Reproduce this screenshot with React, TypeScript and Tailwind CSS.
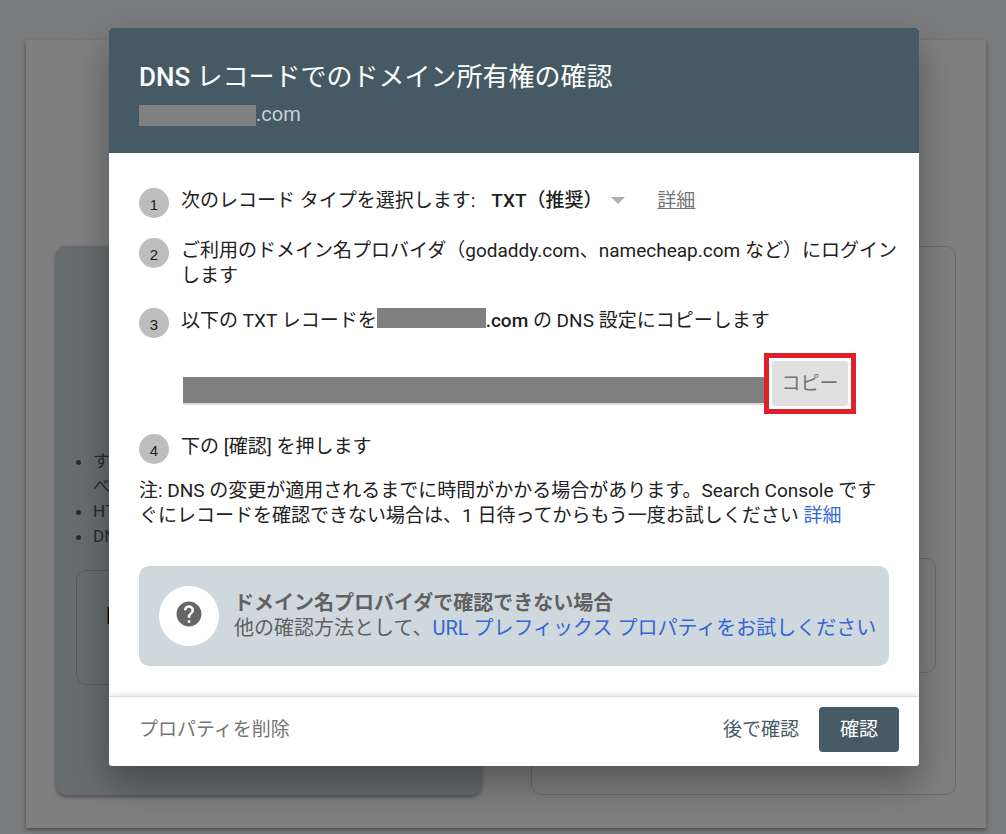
import type { ReactNode } from "react";
import { MdHelp } from "react-icons/md";

function Step({ number, children }: { number: number; children: ReactNode }) {
  return (
    <li className="flex items-start gap-3">
      <span className="flex size-[30px] shrink-0 items-center justify-center rounded-full bg-[#bdbdbd] pt-0.5 font-['Liberation_Sans',sans-serif] text-[15px]">
        {number}
      </span>
      <div className="min-w-0 flex-1">{children}</div>
    </li>
  );
}

function PropertyTypes() {
  return (
    <main className="mx-5 ml-[26px] flex h-[788px] gap-[50px] bg-white px-[30px] pt-[206px] pb-[33px] shadow-[0_2px_4px_rgba(0,0,0,0.4)]">
      <section className="flex flex-1 flex-col rounded-[10px] bg-[#cfd8dc] px-5 pt-[203px] shadow-[0_2px_4px_rgba(0,0,0,0.4)]">
        <ul className="list-disc pl-[17px] text-[17px] leading-[25px] text-[#455a64]">
          <li>
            すべ
            <br />
            べて
          </li>
          <li>HTTPS</li>
          <li>DNS</li>
        </ul>
        <div className="mt-[21px] h-[115px] rounded-[10px] border border-[#a9b4b9] px-[25px] pt-[30px] text-[20px] font-bold text-black">
          ドメイン
        </div>
      </section>
      <section className="flex-1 rounded-[10px] border border-[#d4d4d4] px-[19px] pt-[311px]">
        <div className="h-[115px] rounded-[10px] border border-[#d4d4d4]" />
      </section>
    </main>
  );
}

export default function App() {
  return (
    <div className="relative min-h-screen overflow-hidden bg-[#f4f6f9] pt-10 font-['Roboto','Noto_Sans_CJK_JP',sans-serif]">
      <PropertyTypes />
      <div className="absolute inset-0 bg-black/50 pt-7 pr-[87px] pl-[109px]">
        <div
          role="dialog"
          aria-modal="true"
          aria-labelledby="dialog-title"
          className="overflow-hidden rounded-[3px] bg-white text-[19px] leading-[25px] text-[#212121] shadow-[0_18px_36px_rgba(0,0,0,0.32)]"
        >
          <header className="bg-[#455a64] px-[30px] pt-[31px] pb-[22px]">
            <h1 id="dialog-title" className="text-[26px] leading-9 text-white">
              <span className="font-medium">DNS</span> レコードでのドメイン所有権の確認
            </h1>
            <p className="flex h-9 items-center pt-0.5 text-[20px] text-[#c7d0d5]">
              <span className="mt-0.5 h-[21px] w-[117px] bg-[#808080]" />
              .com
            </p>
          </header>

          <div className="pt-[35px] pb-[30px] pl-[30px]">
            <ol className="flex flex-col gap-5 pr-5">
              <Step number={1}>
                <div className="flex items-center">
                  <label htmlFor="record-type">次のレコード タイプを選択します:</label>
                  <div className="ml-4 flex items-center">
                    <select
                      id="record-type"
                      className="w-[136px] appearance-none bg-transparent font-medium"
                    >
                      <option>TXT（推奨）</option>
                    </select>
                    <svg viewBox="0 0 14 7" className="pointer-events-none -ml-4 h-[7px] w-3.5" fill="#b0b0b0">
                      <path d="M0 0h14L7 7z" />
                    </svg>
                  </div>
                  <a href="#record-details" className="ml-8 text-[#757575] underline">
                    詳細
                  </a>
                </div>
              </Step>
              <Step number={2}>
                ご利用のドメイン名プロバイダ（godaddy.com、namecheap.com など）にログインします
              </Step>
              <Step number={3}>
                <p>
                  以下の TXT レコードを
                  <span className="inline-block h-5 w-[109px] bg-[#808080] align-[-1px]" />
                  <span className="font-medium">.com</span> の DNS 設定にコピーします
                </p>
                <div className="mt-5 mr-[43px] flex items-end pl-0.5">
                  <input
                    aria-label="TXT"
                    readOnly
                    className="mb-[9px] h-7 min-w-0 flex-1 border-b-2 border-[#dcdcdc] bg-[#808080] outline-none"
                  />
                  <div className="border-[5px] border-[#dd2029] p-[3px]">
                    <button className="h-[45px] w-[76px] rounded-[3px] bg-[#e0e0e0] text-[#757575]">コピー</button>
                  </div>
                </div>
              </Step>
              <Step number={4}>下の [確認] を押します</Step>
            </ol>

            <p className="mt-3.5 pr-[30px]">
              注: DNS の変更が適用されるまでに時間がかかる場合があります。Search Console ですぐにレコードを確認できない場合は、1 日待ってからもう一度お試しください{" "}
              <a href="#dns-details" className="text-[#3367d6]">
                詳細
              </a>
            </p>

            <section className="mt-[38px] mr-[30px] flex h-[100px] items-center gap-[15px] rounded-[10px] bg-[#cfd8dc] pl-5 text-[20px] text-[#616161]">
              <span className="flex size-[60px] shrink-0 items-center justify-center rounded-full bg-white pb-1">
                <MdHelp className="size-[30px] text-[#666666]" />
              </span>
              <div>
                <h2 className="font-bold">ドメイン名プロバイダで確認できない場合</h2>
                <p className="whitespace-nowrap">
                  他の確認方法として、
                  <a href="#url-prefix" className="text-[#3367d6]">
                    URL プレフィックス プロパティをお試しください
                  </a>
                </p>
              </div>
            </section>
          </div>

          <footer className="flex items-center border-t border-[#dcdcdc] px-5 pt-2.5 pb-3.5 shadow-[0_0_8px_rgba(0,0,0,0.16)]">
            <button className="px-2.5 text-[#757575]">プロパティを削除</button>
            <button className="ml-auto px-5 text-[#455a64]">後で確認</button>
            <button className="h-[45px] w-20 rounded-[4px] bg-[#455a64] text-white">確認</button>
          </footer>
        </div>
      </div>
    </div>
  );
}
